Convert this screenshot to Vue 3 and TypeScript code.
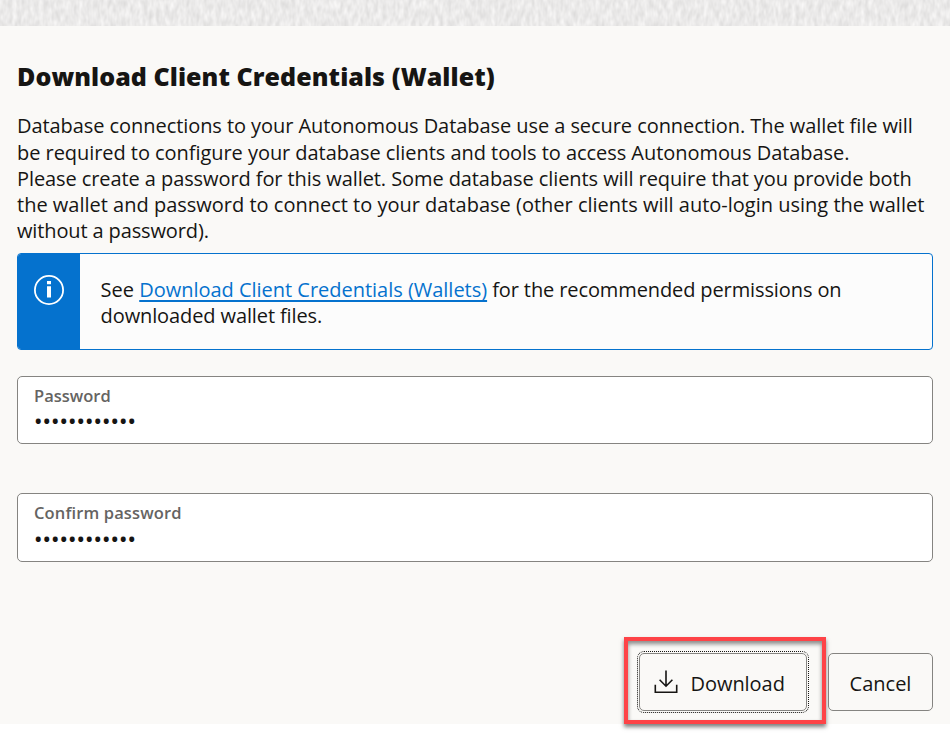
<script setup lang="ts">
import { ref } from 'vue'

interface Line {
  text: string
  spacing: string
}

const intro: Line[] = [
  { text: 'Database connections to your Autonomous Database use a secure connection. The wallet file will', spacing: '-0.065px' },
  { text: 'be required to configure your database clients and tools to access Autonomous Database.', spacing: '-0.05px' },
  { text: 'Please create a password for this wallet. Some database clients will require that you provide both', spacing: '-0.085px' },
  { text: 'the wallet and password to connect to your database (other clients will auto-login using the wallet', spacing: '0px' },
  { text: 'without a password).', spacing: '-0.13px' },
]

const password = ref('wallet-pass1')
const confirmation = ref('wallet-pass1')
</script>

<template>
  <main class="page">
    <svg class="texture" width="950" height="26" aria-hidden="true">
      <filter id="grain" x="0" y="0" width="100%" height="100%" color-interpolation-filters="sRGB">
        <feTurbulence type="fractalNoise" baseFrequency="0.23 0.1" numOctaves="2" seed="4" />
        <feColorMatrix values="0.15 0 0 0 0.846  0.15 0 0 0 0.842  0.15 0 0 0 0.84  0 0 0 0 1" />
      </filter>
      <rect width="950" height="26" filter="url(#grain)" />
    </svg>

    <section class="panel">
      <h1>Download Client Credentials (Wallet)</h1>

      <div class="intro">
        <p v-for="line in intro" :key="line.text" :style="{ letterSpacing: line.spacing }">{{ line.text }}</p>
      </div>

      <div class="notice">
        <div class="notice-icon">
          <svg width="30" height="30" viewBox="0 0 30 30" fill="none">
            <circle cx="15" cy="15" r="14.1" stroke="#fff" stroke-width="1.8" />
            <path d="M13 6h4v3.3h-4zM13 11.3h4V22.6h-4z" fill="#fff" />
          </svg>
        </div>
        <div class="notice-text">
          <p>See <a href="#">Download Client Credentials (Wallets)</a><span> for the recommended permissions on</span></p>
          <p><span>downloaded wallet files.</span></p>
        </div>
      </div>

      <label class="field">
        <span>Password</span>
        <input v-model="password" type="password" />
      </label>
      <label class="field confirm">
        <span>Confirm password</span>
        <input v-model="confirmation" type="password" />
      </label>

      <div class="actions">
        <div class="highlight">
          <button class="download" type="button">
            <svg width="24" height="24" viewBox="0 0 24 24" fill="none" stroke="#161513" stroke-width="1.6">
              <path d="M1.3 14.7V22.2H22.7V14.7M12 0.5V16.2M5.6 9.8L12 16.2L18.4 9.8" />
            </svg>
            <span>Download</span>
          </button>
        </div>
        <button class="cancel" type="button">Cancel</button>
      </div>
    </section>
  </main>
</template>

<style>
body { background: #fff; }
</style>

<style scoped>
.page {
  min-height: 100vh;
  font-family: "Open Sans", "Noto Sans", sans-serif;
  font-size: 20px;
  line-height: 26.25px;
  color: #161513;
}
.texture { display: block; }
.panel {
  box-sizing: border-box;
  height: 698px;
  padding: 33px 17px 0;
  background: #faf9f7;
}
h1 {
  margin: 0 0 20.25px;
  font-size: 25px;
  line-height: 34px;
  font-weight: 800;
  letter-spacing: 0.06px;
  white-space: nowrap;
}
p { margin: 0; white-space: nowrap; }
.intro { height: 139.75px; }
.notice {
  display: flex;
  box-sizing: border-box;
  height: 97px;
  border: 1px solid #0572ce;
  border-radius: 4px;
  background: #fcfcfc;
  overflow: hidden;
}
.notice-icon {
  width: 62px;
  padding: 21px 0 0 16px;
  box-sizing: border-box;
  background: #0572ce;
}
.notice-icon svg { display: block; }
.notice-text { padding: 23px 0 0 20.6px; }
.notice-text a { color: #0572ce; letter-spacing: -0.02px; text-underline-offset: 2.5px; text-decoration-thickness: 2px; }
.notice-text span { letter-spacing: -0.11px; white-space: pre; }
.field {
  display: flex;
  flex-direction: column;
  box-sizing: border-box;
  height: 68px;
  margin-top: 26px;
  padding: 7px 16px 0;
  border: 1px solid #858481;
  border-radius: 5px;
  background: #fff;
}
.field span {
  height: 22px;
  font-size: 16.5px;
  line-height: 24px;
  font-weight: 600;
  color: #656462;
}
.field input {
  height: 28px;
  margin: 0;
  padding: 0;
  border: 0;
  outline: 0;
  background: transparent;
  color: #161513;
  font: 22.5px "Noto Sans", sans-serif;
  letter-spacing: 0.03px;
}
.confirm { height: 69px; margin-top: 49px; }
.confirm span { height: 23px; letter-spacing: 0.13px; }
.actions {
  display: flex;
  justify-content: flex-end;
  align-items: flex-start;
  gap: 2px;
  margin-top: 75px;
}
.highlight {
  box-sizing: border-box;
  width: 202px;
  height: 87px;
  padding: 12px 0 0 11px;
  border: 4px solid #fe4347;
  box-shadow: 0 3px 4px rgba(0, 0, 0, 0.5), inset 0 3px 4px rgba(0, 0, 0, 0.45);
}
button {
  box-sizing: border-box;
  height: 58px;
  padding: 0;
  border: 1px solid #858481;
  border-radius: 5px;
  background: #faf9f7;
  color: inherit;
  font: inherit;
}
.download {
  display: flex;
  align-items: center;
  width: 168px;
  padding: 5px 0 0 14px;
  gap: 12.5px;
  outline: 1px dotted #161513;
  outline-offset: 1px;
}
.download svg { position: relative; top: -3px; }
.download span { letter-spacing: -0.05px; }
.cancel { width: 105px; margin-top: 16px; padding-top: 5px; }
</style>
